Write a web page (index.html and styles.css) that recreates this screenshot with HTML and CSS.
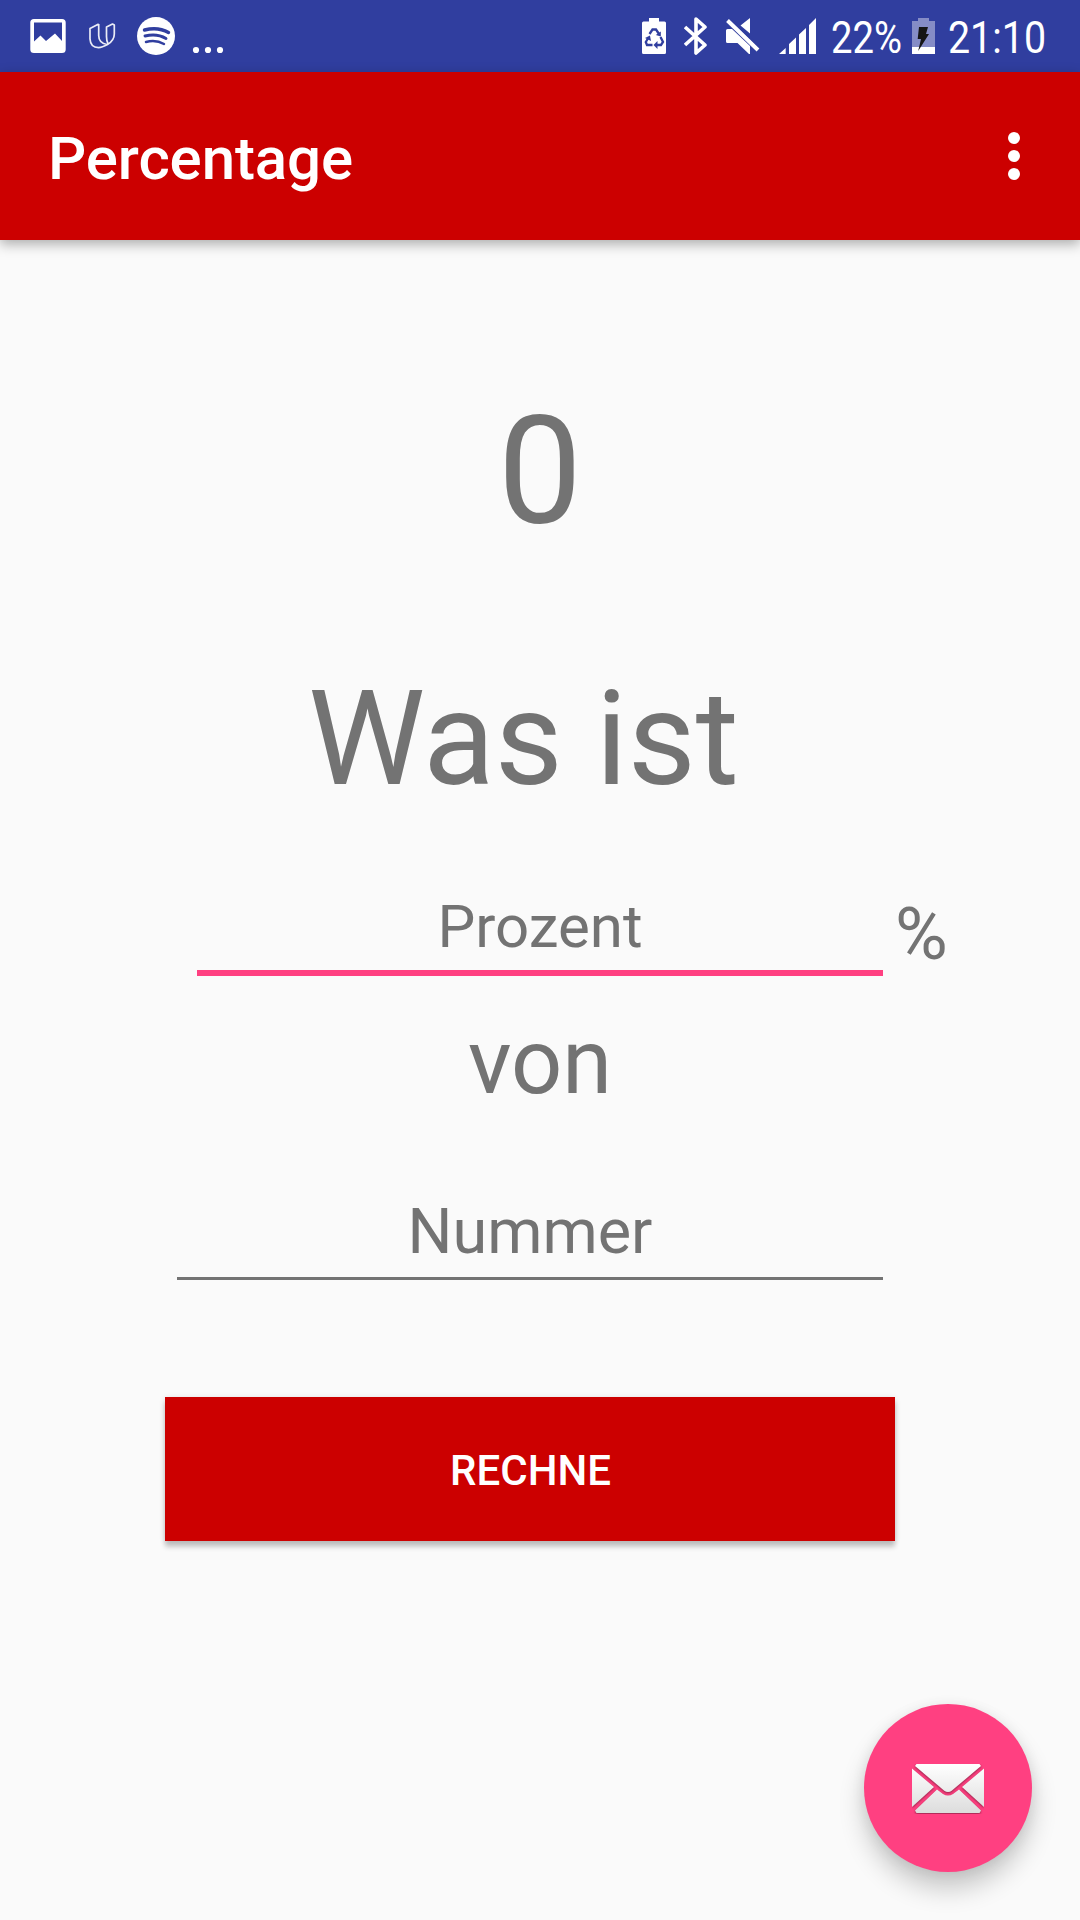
FILE: index.html
```html
<!DOCTYPE html>
<html lang="de">
<head>
<meta charset="utf-8">
<title>Percentage</title>
<link rel="stylesheet" href="styles.css">
</head>
<body>
<div class="screen">
  <header class="status">
    <div class="status-left">
      <svg class="icon" width="36" height="72" viewBox="30 0 36 72"><path fill="#fff" fill-rule="evenodd" d="M34 19H62Q65.700 19 65.700 22.500V49.500Q65.700 53 62 53H34Q30.300 53 30.300 49.500V22.500Q30.300 19 34 19ZM34 22.500V41.500L40.500 35.500L46 41L55 33.500L62 41V22.500Z"/></svg>
      <svg class="icon udacity" width="28" height="72" viewBox="88 0 28 72"><path fill="none" stroke="#fff" stroke-opacity=".9" stroke-width="1.700" stroke-linejoin="round" d="M98.700 24L90 28.500V39Q90.500 47.600 98.500 47.600Q102 47.500 107.500 44.500Q114.300 40.500 114.300 34V25L112.500 24L106.500 27V36.500Q106.500 41 108 43.700M98.700 24V35.500Q98.700 43 107 44.500"/></svg>
      <svg class="icon" width="40" height="72" viewBox="136 0 40 72"><circle cx="156" cy="36" r="19" fill="#fff"/><g fill="none" stroke="#303e9f" stroke-linecap="round"><path stroke-width="3.400" d="M144.500 30Q158 26.500 168.500 32.500"/><path stroke-width="2.900" d="M145 36Q157 33 166 38.500"/><path stroke-width="2.500" d="M146 42Q156 39.500 164 44"/></g></svg>
      <svg class="icon dots" width="34" height="72" viewBox="191 0 34 72" fill="#fff"><circle cx="196" cy="50" r="3.100"/><circle cx="208" cy="50" r="3.100"/><circle cx="220" cy="50" r="3.100"/></svg>
    </div>
    <div class="status-right">
      <svg class="icon" width="24" height="72" viewBox="642 0 24 72"><path fill="#fff" d="M649 18H659V21.500H664.500Q666 21.500 666 23V52.500Q666 54 664.500 54H643.500Q642 54 642 52.500V23Q642 21.500 643.500 21.500H649Z"/><g fill="none" stroke="#303e9f" stroke-width="2.300"><path d="M649.500 34L652.500 29.500H656L659 34"/><path d="M660.500 37L663 42L661 45H656"/><path d="M652.500 45H647L645.800 42L648.300 38"/></g><g fill="#303e9f"><path d="M660.800 31.500V36.500L655.800 35Z"/><path d="M657.500 41V49L653.500 45Z"/><path d="M645 38L650 35.500L651 41Z"/></g></svg>
      <svg class="icon bluetooth" width="24" height="72" viewBox="684 0 24 72"><path fill="none" stroke="#fff" stroke-width="3.600" stroke-linejoin="round" d="M685 27L705 45L696 53V19L705 27L685 45"/></svg>
      <svg class="icon mute" width="34" height="72" viewBox="726 0 34 72"><path fill="#fff" d="M740.500 25.500L750 18V33.500ZM726 30.500Q726 29 727.500 29H732L750 46V54H749L737.500 43H727.500Q726 43 726 41.500Z"/><path d="M727.500 20.500L758 50" stroke="#fff" stroke-width="4"/><path d="M730.500 18.500L761 48" stroke="#303e9f" stroke-width="2"/></svg>
      <svg class="icon signal" width="37" height="72" viewBox="779 0 37 72" fill="#fff"><path d="M779 54L785.700 48V54ZM789 54V44L796 37.500V54ZM799 54V34.500L806 28V54ZM809 54V25L816 18V54Z"/></svg>
      <svg class="percent" width="72" height="72"><text class="status-text" x="0" y="53" textLength="71" lengthAdjust="spacingAndGlyphs">22%</text></svg>
      <svg class="icon battery" width="24" height="72" viewBox="912 0 24 72"><path fill="#858cc6" d="M918 18H929V21H935V47H912V21H918Z"/><path fill="#fff" d="M912 47H935V54H912Z"/><path fill="#151515" d="M919 27H928L926 34H929L918.200 51L921 39H917.700Z"/></svg>
      <svg class="time" width="100" height="72"><text class="status-text" x="0" y="53" textLength="98" lengthAdjust="spacingAndGlyphs">21:10</text></svg>
    </div>
  </header>
  <div class="appbar">
    <h1 class="title">Percentage</h1>
    <svg class="more" width="12" height="48" viewBox="0 0 12 48" fill="#fff"><circle cx="6" cy="6" r="6"/><circle cx="6" cy="24" r="6"/><circle cx="6" cy="42" r="6"/></svg>
  </div>
  <main class="content">
    <div class="result">0</div>
    <div class="question">Was ist</div>
    <div class="percent-row">
      <div class="field focused">Prozent</div>
      <span class="unit">%</span>
    </div>
    <div class="of">von</div>
    <div class="field number">Nummer</div>
    <button class="calculate">RECHNE</button>
  </main>
  <button class="fab" aria-label="E-Mail">
    <svg width="72" height="50" viewBox="0 0 72 50">
      <defs><linearGradient id="paper" gradientUnits="userSpaceOnUse" x1="0" y1="0" x2="0" y2="50"><stop offset="0" stop-color="#fff"/><stop offset="1" stop-color="#dcdcdc"/></linearGradient></defs>
      <g class="paper" fill="url(#paper)"><path d="M4.500 0H67.500L69 2L40 26.500Q36 29.500 32 26.500L3 2Z"/><path d="M0 4.500L22 23L0 43Z"/><path d="M72 4.500L50 23L72 43Z"/><path d="M25 25.500L31 30Q36 33 41 30L47 25.500L69 46.500L67.500 49H4.500L3 46.500Z"/></g>
    </svg>
  </button>
</div>
</body>
</html>
```
FILE: styles.css
```css
* { box-sizing: border-box; }
body { margin: 0; background: #fafafa; font-family: Roboto, sans-serif; color: #737373; }
button { border: 0; padding: 0; font-family: inherit; }
svg { display: block; flex: none; }

.screen { position: relative; width: 1080px; height: 1920px; display: flex; flex-direction: column; overflow: hidden; }

.status { height: 72px; background: #303e9f; display: flex; justify-content: space-between; padding: 0 32px 0 30px; }
.status-left, .status-right { display: flex; }
.udacity { margin-left: 22px; }
.status-left .udacity + .icon { margin-left: 20px; }
.status-left .dots { margin-left: 15px; }
.bluetooth { margin-left: 18px; }
.mute { margin-left: 18px; }
.signal { margin-left: 19px; }
.percent { margin-left: 15px; overflow: visible; }
.battery { margin-left: 9px; }
.time { margin-left: 12px; overflow: visible; }
.status-text { font-size: 45px; fill: #fff; }

.appbar { position: relative; height: 168px; background: #cc0000; display: flex; align-items: center; justify-content: space-between; padding: 0 60px 0 48px; box-shadow: 0 4px 12px rgba(0, 0, 0, .32); }
.title { margin: 5px 0 0; font-size: 60px; line-height: 70px; font-weight: 500; letter-spacing: -.1px; color: #fff; }

.content { display: flex; flex-direction: column; }
.result { margin-top: 144px; font-size: 150px; line-height: 176px; text-align: center; }
.question { margin: 101px 33px 0 0; font-size: 132px; line-height: 156px; text-align: center; }
.field { text-align: center; white-space: nowrap; }
.percent-row { display: flex; margin: 74px 0 0 197px; }
.focused { width: 686px; height: 85px; padding-top: 1px; border-bottom: 6px solid #ff4081; font-size: 60px; line-height: 70px; }
.unit { height: 85px; padding-top: 2px; margin-left: 12px; font-size: 72px; line-height: 84px; }
.of { margin-top: 34px; font-size: 90px; line-height: 106px; text-align: center; }
.number { width: 706px; height: 85px; margin: 79px 0 0 177px; border-bottom: 3px solid #737373; font-size: 63px; line-height: 74px; }
.calculate { width: 730px; height: 144px; margin: 117px 0 0 165px; background: #cc0000; color: #fff; font-size: 42px; font-weight: 500; line-height: 50px; padding: 4px 0 0 1px; box-shadow: 0 6px 5px rgba(0, 0, 0, .2), 0 1px 6px rgba(0, 0, 0, .12); }

.fab { position: absolute; left: 864px; top: 1704px; width: 168px; height: 168px; border-radius: 50%; background: #ff4081; display: flex; align-items: center; justify-content: center; padding-top: 2px; box-shadow: 0 17px 26px rgba(0, 0, 0, .2), 0 2px 14px rgba(0, 0, 0, .08); }
.paper { filter: drop-shadow(0 1px 1px rgba(0, 0, 0, .45)); }
```
